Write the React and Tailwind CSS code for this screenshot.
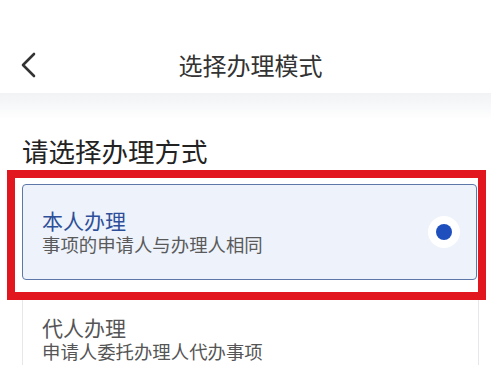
import React from "react";

export default function App() {
  const font = { fontFamily: '"Noto Sans CJK SC", "Noto Sans", sans-serif' };
  return (
    <div className="w-[491px] h-[365px] bg-white overflow-hidden" style={font}>
      <div className="relative flex h-[93px] items-center pt-[36px]">
        <div className="absolute left-[18px] top-[50px]">
          <svg width="22" height="30" viewBox="0 0 22 30">
            <path d="M16 4 L5 15 L16 26" fill="none" stroke="#333" strokeWidth="2.6" strokeLinecap="round" strokeLinejoin="round" />
          </svg>
        </div>
        <div className="flex-1 text-center pl-[10px] text-[24px] leading-none text-[#333]">选择办理模式</div>
      </div>
      <div className="h-[26px] bg-gradient-to-b from-[#f2f3f5] via-[#f7f8f9] to-white" />
      <div className="mt-[19px] pl-[22px] text-[26.5px] leading-none text-[#222]">请选择办理方式</div>
      <div className="mt-[5px] ml-[7px] mr-[5px] border-[8px] border-[#e2161e] pt-[6px] pl-[7px] pr-[1px] pb-[12px]">
        <div className="flex h-[96px] items-center rounded-[4px] border border-[#5d78a8] bg-[#edf2fb] pl-[19px] pr-[16px]">
          <div className="flex-1">
            <div className="text-[21px] leading-[24px] text-[#2d4f99]">本人办理</div>
            <div className="mt-[2px] text-[18.4px] leading-[21px] text-[#5a5a5a]">事项的申请人与办理人相同</div>
          </div>
          <div className="flex h-[32px] w-[32px] items-center justify-center rounded-full bg-white">
            <div className="h-[16px] w-[16px] rounded-full bg-[#1e4fbd]" />
          </div>
        </div>
      </div>
      <div className="mx-[22px] mr-[12px] h-[80px] border-x border-[#e5e7eb] pl-[19px] pt-[15px]">
        <div className="text-[21px] leading-[24px] text-[#555]">代人办理</div>
        <div className="mt-[2px] text-[18.4px] leading-[21px] text-[#555]">申请人委托办理人代办事项</div>
      </div>
    </div>
  );
}
